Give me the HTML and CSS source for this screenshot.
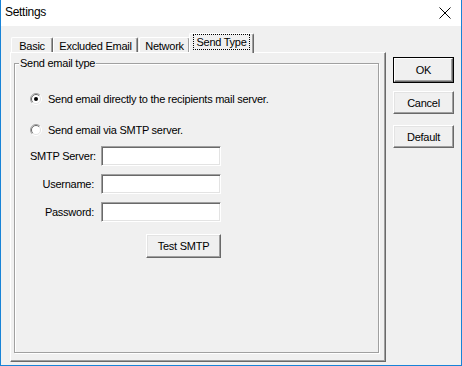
FILE: index.html
```html
<!DOCTYPE html>
<html>
<head>
<meta charset="utf-8">
<link rel="stylesheet" href="styles.css">
</head>
<body>
<div class="window">
  <div class="titlebar">
    <span class="title">Settings</span>
    <svg class="close" width="12" height="12" viewBox="0 0 12 12"><path d="M0.5 0.5 L11.5 11.5 M11.5 0.5 L0.5 11.5" stroke="#000" stroke-width="1" fill="none"/></svg>
  </div>
  <div class="client">
    <div class="left">
      <div class="tabs">
        <div class="tab t-basic">Basic</div>
        <div class="tab t-excl">Excluded Email</div>
        <div class="tab t-net">Network</div>
        <div class="tab t-send selected"><span class="focus">Send Type</span></div>
      </div>
      <div class="panel">
        <div class="group">
          <span class="legend">Send email type</span>
          <div class="radio-row r1">
            <svg class="radio" width="12" height="12" viewBox="0 0 12 12">
              <circle cx="6" cy="6" r="5" fill="#fff"/>
              <path d="M2.1 9.9 A5.5 5.5 0 0 1 9.9 2.1" stroke="#a0a0a0" fill="none"/>
              <path d="M2.1 9.9 A5.5 5.5 0 0 0 9.9 2.1" stroke="#fff" fill="none"/>
              <path d="M2.8 9.2 A4.5 4.5 0 0 1 9.2 2.8" stroke="#696969" fill="none"/>
              <path d="M2.8 9.2 A4.5 4.5 0 0 0 9.2 2.8" stroke="#e3e3e3" fill="none"/>
              <circle cx="6" cy="6" r="2" fill="#000"/>
            </svg>
            <span>Send email directly to the recipients mail server.</span>
          </div>
          <div class="radio-row r2">
            <svg class="radio" width="12" height="12" viewBox="0 0 12 12">
              <circle cx="6" cy="6" r="5" fill="#fff"/>
              <path d="M2.1 9.9 A5.5 5.5 0 0 1 9.9 2.1" stroke="#a0a0a0" fill="none"/>
              <path d="M2.1 9.9 A5.5 5.5 0 0 0 9.9 2.1" stroke="#fff" fill="none"/>
              <path d="M2.8 9.2 A4.5 4.5 0 0 1 9.2 2.8" stroke="#696969" fill="none"/>
              <path d="M2.8 9.2 A4.5 4.5 0 0 0 9.2 2.8" stroke="#e3e3e3" fill="none"/>
            </svg>
            <span>Send email via SMTP server.</span>
          </div>
          <div class="form">
            <div class="field"><label>SMTP Server:</label><div class="input"></div></div>
            <div class="field"><label>Username:</label><div class="input"></div></div>
            <div class="field"><label>Password:</label><div class="input"></div></div>
          </div>
          <div class="btn test">Test SMTP</div>
        </div>
      </div>
    </div>
    <div class="buttons">
      <div class="btn default-btn"><div class="btn-inner">OK</div></div>
      <div class="btn side">Cancel</div>
      <div class="btn side">Default</div>
    </div>
  </div>
</div>
</body>
</html>
```

FILE: styles.css
```css
* { box-sizing: border-box; }
html, body { margin: 0; padding: 0; background: #fff; }
body {
  font-family: "Liberation Sans", Arial, sans-serif;
  font-size: 11px;
  letter-spacing: -0.25px;
  color: #000;
}
.window {
  width: 462px;
  height: 366px;
  display: flex;
  flex-direction: column;
  border-left: 1px solid #1883d7;
  border-right: 1px solid #1883d7;
  border-bottom: 1px solid #1883d7;
  background: #f0f0f0;
}
.titlebar {
  height: 26px;
  background: #fff;
  display: flex;
  align-items: center;
  justify-content: space-between;
  padding: 0 10px 0 4px;
}
.title {
  font-size: 12px;
  letter-spacing: -0.3px;
  position: relative;
  top: -1px;
}
.close { display: block; margin-top: -1px; }
.client {
  flex: 1;
  display: flex;
  padding-top: 7px;
  padding-left: 9px;
}
.left { width: 376px; display: flex; flex-direction: column; }
.tabs {
  height: 19px;
  display: flex;
  align-items: flex-end;
  padding-left: 1px;
  position: relative;
  z-index: 2;
}
.tab {
  height: 15px;
  border-top: 1px solid #fff;
  border-left: 1px solid #fff;
  border-right: 1px solid #696969;
  box-shadow: inset -1px 0 0 #a0a0a0;
  border-radius: 2px 2px 0 0;
  display: flex;
  align-items: center;
  justify-content: center;
  padding-top: 1px;
  background: #f0f0f0;
}
.t-basic { width: 42px; }
.t-excl { width: 85px; }
.t-net { width: 51px; margin-left: 1px; }
.t-send {
  width: 65px;
  height: 20px;
  margin-bottom: -1px;
  margin-left: -1px;
  padding-top: 0;
  padding-bottom: 3px;
}
.focus {
  outline: 1px dotted #000;
  outline-offset: 0;
  padding: 0 2px;
  line-height: 14px;
}
.panel {
  height: 310px;
  border-top: 1px solid #fff;
  border-left: 1px solid #fff;
  border-right: 1px solid #696969;
  border-bottom: 1px solid #696969;
  box-shadow: inset -1px -1px 0 #a0a0a0;
  padding: 10px 0 0 3px;
}
.group {
  position: relative;
  width: 365px;
  height: 290px;
  border: 1px solid #a0a0a0;
  box-shadow: 1px 1px 0 #fff, inset 1px 1px 0 #fff;
  padding: 28px 0 0 15px;
}
.legend {
  position: absolute;
  top: -7px;
  left: 4px;
  background: #f0f0f0;
  padding: 0 1px;
  line-height: 13px;
}
.radio-row {
  display: flex;
  align-items: center;
  height: 13px;
  gap: 6px;
}
.radio { display: block; flex: none; }
.r2 { margin-top: 18px; }
.form {
  margin-top: 10px;
  display: flex;
  flex-direction: column;
  gap: 8px;
}
.field { display: flex; align-items: center; height: 20px; }
.field label {
  width: 64px;
  text-align: right;
  margin-right: 7px;
  white-space: nowrap;
}
.input {
  width: 120px;
  height: 20px;
  background: #fff;
  border-top: 1px solid #a0a0a0;
  border-left: 1px solid #a0a0a0;
  border-right: 1px solid #fff;
  border-bottom: 1px solid #fff;
  box-shadow: inset 1px 1px 0 #696969, inset -1px -1px 0 #e3e3e3;
}
.btn {
  display: flex;
  align-items: center;
  justify-content: center;
  background: #f0f0f0;
  border-top: 1px solid #fff;
  border-left: 1px solid #fff;
  border-right: 1px solid #696969;
  border-bottom: 1px solid #696969;
  box-shadow: inset -1px -1px 0 #a0a0a0, inset 1px 1px 0 #e3e3e3;
}
.test {
  width: 75px;
  height: 24px;
  margin-top: 12px;
  margin-left: 116px;
}
.buttons {
  margin-left: 7px;
  padding-top: 24px;
  display: flex;
  flex-direction: column;
  width: 61px;
}
.default-btn {
  height: 26px;
  border: 1px solid #000;
  box-shadow: none;
  padding: 0;
}
.btn-inner {
  width: 100%;
  height: 100%;
  display: flex;
  align-items: center;
  justify-content: center;
  border-top: 1px solid #fff;
  border-left: 1px solid #fff;
  border-right: 1px solid #696969;
  border-bottom: 1px solid #696969;
  box-shadow: inset -1px -1px 0 #a0a0a0;
}
.side { height: 23px; margin-top: 8px; }
.side + .side { margin-top: 11px; }
```
